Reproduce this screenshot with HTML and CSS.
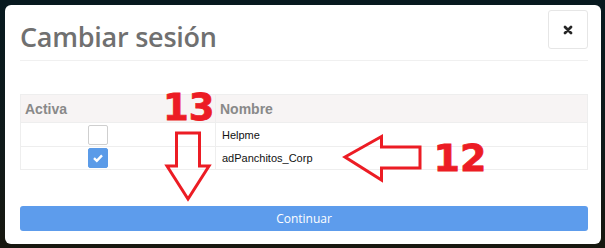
FILE: index.html
```html
<!DOCTYPE html>
<html lang="es">
<head>
<meta charset="utf-8">
<title>Cambiar sesión</title>
<link rel="stylesheet" href="styles.css">
</head>
<body>
<div class="modal">
  <div class="modal-header">
    <h2 class="title">Cambiar sesión</h2>
    <button class="close" type="button" aria-label="Cerrar">
      <svg width="10" height="10" viewBox="0 0 10 10"><path d="M2 2 L8 8 M8 2 L2 8" stroke="#262626" stroke-width="2.8" stroke-linecap="round"/></svg>
    </button>
  </div>
  <table class="sessions">
    <thead>
      <tr class="head-row"><th class="col-active">Activa</th><th>Nombre</th></tr>
    </thead>
    <tbody>
      <tr class="row-1"><td class="col-active"><span class="check"></span></td><td>Helpme</td></tr>
      <tr class="row-2"><td class="col-active"><span class="check checked"><svg width="12" height="10" viewBox="0 0 12 10"><path d="M2 5.2 L4.8 7.8 L10 2.4" stroke="#fff" stroke-width="2.4" fill="none"/></svg></span></td><td>adPanchitos_Corp</td></tr>
    </tbody>
  </table>
  <button class="continue" type="button">Continuar</button>
</div>
<svg class="annotations" width="605" height="248" viewBox="0 0 605 248">
  <text x="163" y="120" class="num" font-size="37">13</text>
  <text x="433.5" y="171" class="num" font-size="38">12</text>
  <polygon points="176.5,133 199.5,133 199.5,166 209,166 188,199 167,166 176.5,166" fill="none" stroke="#ec1c24" stroke-width="3"/>
  <polygon points="345,157 381.5,136.5 381.5,147 420,147 420,168 381.5,168 381.5,180" fill="none" stroke="#ec1c24" stroke-width="3"/>
</svg>
</body>
</html>
```
FILE: styles.css
```css
html, body {
  margin: 0;
  padding: 0;
}
body {
  width: 605px;
  height: 248px;
  overflow: hidden;
  background: linear-gradient(180deg, #07191f 0%, #101a1a 60%, #17170f 100%);
  position: relative;
  font-family: "Liberation Sans", Arial, sans-serif;
}
.modal {
  margin: 5px 0 0 5px;
  width: 596px;
  height: 239px;
  background: #fff;
  border-radius: 6px;
  padding: 0 13px 0 15px;
  box-sizing: border-box;
  display: flex;
  flex-direction: column;
}
.modal-header {
  height: 56px;
  box-sizing: border-box;
  border-bottom: 1px solid #f0f0f0;
  display: flex;
  justify-content: space-between;
  align-items: flex-start;
  padding-top: 5px;
}
.title {
  margin: 9px 0 0 0;
  font-family: "Open Sans", sans-serif;
  font-weight: 600;
  font-size: 27px;
  line-height: 36px;
  color: #707070;
  letter-spacing: -0.25px;
}
.close {
  width: 40px;
  height: 39px;
  border: 1px solid #e6e6e6;
  border-radius: 3px;
  background: #fff;
  padding: 0;
  display: flex;
  align-items: center;
  justify-content: center;
}
.sessions {
  margin-top: 33px;
  width: 568px;
  border-collapse: collapse;
  table-layout: fixed;
  font-family: "Liberation Sans", Arial, sans-serif;
}
.sessions th, .sessions td {
  border: 1px solid #eeeeee;
  padding: 0 0 0 4px;
  text-align: left;
  vertical-align: middle;
}
.sessions th.col-active, .sessions td.col-active {
  width: 195px;
  box-sizing: border-box;
}
.head-row {
  height: 28px;
  background: #f7f4f4;
}
.sessions th {
  font-size: 14px;
  font-weight: bold;
  color: #898989;
  padding-top: 1px;
}
.sessions td {
  font-size: 11px;
  color: #111;
  padding-left: 6px;
}
.row-1 { height: 24px; }
.row-2 { height: 23px; }
.sessions td.col-active {
  padding: 0 0 0 67px;
}
.check {
  display: flex;
  align-items: center;
  justify-content: center;
  width: 20px;
  height: 20px;
  box-sizing: border-box;
  border: 1px solid #cfcfcf;
  border-radius: 2px;
  background: #fff;
}
.check.checked {
  background: #5b9be8;
  border-color: #5b9be8;
}
.continue {
  margin-top: 36px;
  width: 568px;
  height: 25px;
  border: none;
  border-radius: 3px;
  background: #5d9cec;
  color: #fff;
  font-family: "Open Sans", sans-serif;
  font-size: 12px;
  padding: 0;
}
.annotations {
  position: absolute;
  left: 0;
  top: 0;
  pointer-events: none;
}
.num {
  font-family: "DejaVu Sans", sans-serif;
  font-weight: bold;
  fill: #ec1c24;
  stroke: #ec1c24;
  stroke-width: 0.8px;
}
```
